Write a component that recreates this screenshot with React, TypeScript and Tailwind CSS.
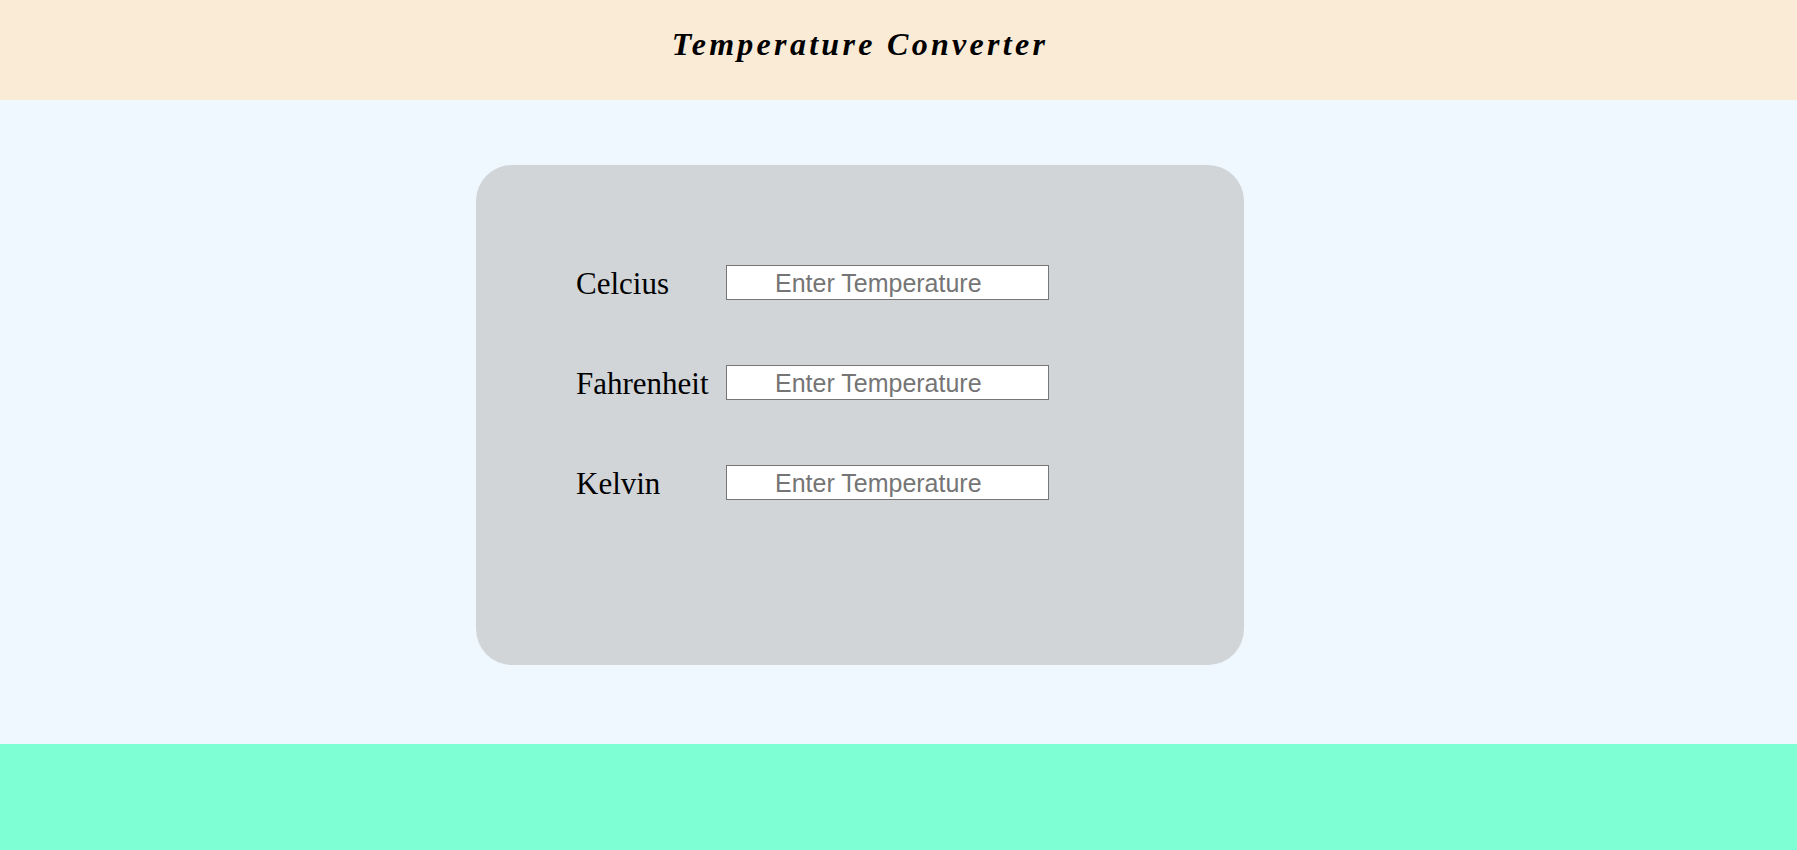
import React from "react";

const rows = ["Celcius", "Fahrenheit", "Kelvin"];

export default function App() {
  return (
    <div className="w-full min-h-[850px] flex flex-col">
      <header className="w-full h-[100px] bg-[#FAEBD7]">
        <div className="w-[1720px] pt-[27px] text-center">
          <h1
            className="text-[32px] leading-[35px] font-bold italic tracking-[3.3px] text-black"
            style={{ fontFamily: '"Liberation Serif", "Times New Roman", serif' }}
          >
            Temperature Converter
          </h1>
        </div>
      </header>
      <main className="w-full h-[644px] bg-[#F0F8FF]">
        <div className="w-[1720px] pt-[65px] flex justify-center">
          <div className="w-[768px] h-[500px] bg-[#D1D5D8] rounded-[36px] pt-[100px] pl-[100px] flex flex-col gap-[65px]">
            {rows.map((r) => (
              <div key={r} className="flex items-center h-[35px]">
                <label
                  className="w-[150px] pt-[3px] text-[31px] leading-[34px] text-black"
                  style={{ fontFamily: '"Liberation Serif", "Times New Roman", serif' }}
                >
                  {r}
                </label>
                <input
                  type="text"
                  placeholder="Enter Temperature"
                  className="w-[323px] h-[35px] pt-[2px] bg-white border border-[#767676] pl-[48px] text-[25px] text-black placeholder:text-[#757575] outline-none"
                  style={{ fontFamily: '"Liberation Sans", Arial, sans-serif' }}
                />
              </div>
            ))}
          </div>
        </div>
      </main>
      <footer className="w-full flex-1 min-h-[106px] bg-[#7FFFD4]" />
    </div>
  );
}
